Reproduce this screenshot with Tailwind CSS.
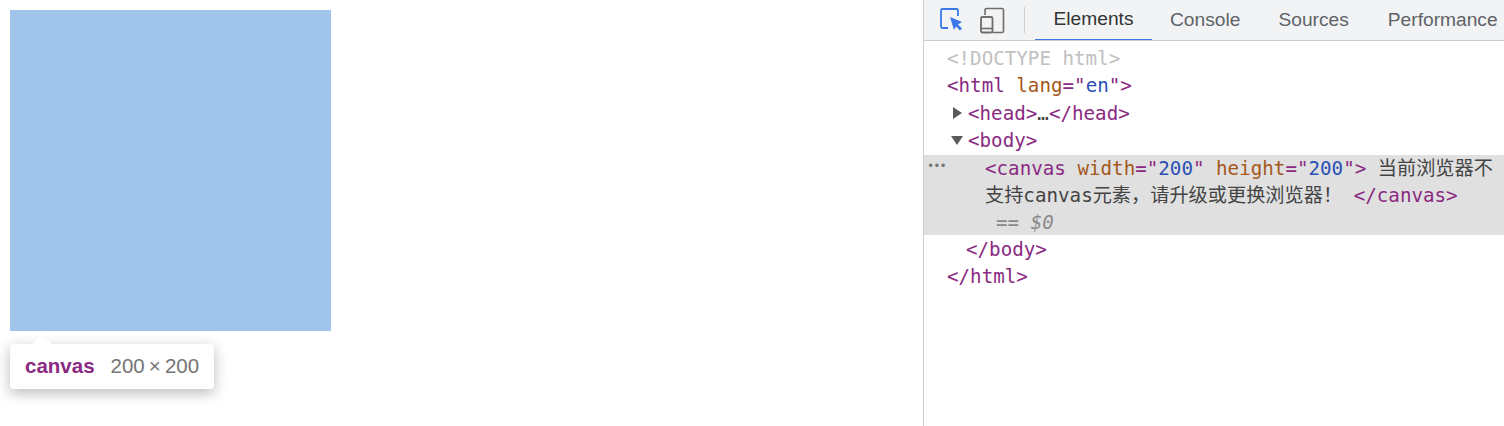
<!DOCTYPE html>
<html lang="en">
<head>
    <meta charset="UTF-8">
    <title>canvas devtools</title>
    <script src="https://cdn.jsdelivr.net/npm/@tailwindcss/browser@4"></script>
</head>
<body class="bg-white h-[426px] overflow-hidden">
    <div class="flex h-[426px]">
        <!-- page viewport -->
        <div class="relative w-[923px] shrink-0 p-[10px]">
            <div class="w-[321px] h-[321px] bg-[#a0c4ea]"></div>

            <!-- inspect tooltip -->
            <div class="absolute left-[10px] top-[344px] w-[204px] h-[45px] bg-white rounded-[4px] shadow-[0_4px_14px_rgba(0,0,0,0.28)] flex items-center pl-[15px] font-['Liberation_Sans',sans-serif] text-[20.500px]">
                <div class="absolute left-[22px] top-[-9px] w-0 h-0 border-x-[10px] border-x-transparent border-b-[9px] border-b-white"></div>
                <span class="font-bold text-[#8a2a82]">canvas</span>
                <span class="ml-[16px] text-[#757575]">200&#8201;×&#8201;200</span>
            </div>
        </div>

        <!-- devtools -->
        <div class="flex-1 min-w-0 border-l border-[#cccccc]">
            <div class="h-[41px] bg-[#f1f3f4] border-b border-[#cbcdd0] flex items-stretch font-['Liberation_Sans',sans-serif] text-[19.200px] text-[#5f6368] whitespace-nowrap overflow-hidden">
                <div class="flex items-center pl-[16px] w-[100px] shrink-0">
                    <svg width="24" height="24" viewBox="0 0 24 24" fill="none">
                        <path d="M8 20H2.500A1.500 1.500 0 0 1 1 18.500V2.500A1.500 1.500 0 0 1 2.500 1H16.500A1.500 1.500 0 0 1 18 2.500V8" stroke="#3b78e7" stroke-width="1.800"/>
                        <path d="M10 9L22 14L18 16.500L22 20.500L20 22.500L16 18.500L14 22Z" fill="#3b78e7"/>
                    </svg>
                    <svg class="ml-[16px]" width="25" height="27" viewBox="0 0 25 27" fill="none">
                        <path d="M5 8V3A1.500 1.500 0 0 1 6.500 1.500H22A1.500 1.500 0 0 1 23.500 3V24A1.500 1.500 0 0 1 22 25.500H12.500" stroke="#6e6e6e" stroke-width="1.600"/>
                        <rect x="1" y="10" width="11.500" height="15.500" rx="1.500" stroke="#6e6e6e" stroke-width="1.800"/>
                        <path d="M1 21.500H12.500" stroke="#6e6e6e" stroke-width="1.600"/>
                    </svg>
                </div>
                <div class="w-px h-[26px] bg-[#d0d0d0] self-center shrink-0"></div>
                <div class="ml-[10px] w-[117px] shrink-0 flex items-center justify-center text-[#333333] border-b-2 border-[#3b78e7] mb-[-1px]">Elements</div>
                <div class="ml-[18px] shrink-0 flex items-center">Console</div>
                <div class="ml-[38px] shrink-0 flex items-center">Sources</div>
                <div class="ml-[39px] shrink-0 flex items-center">Performance</div>
            </div>

            <div class="pt-[4px] font-['DejaVu_Sans_Mono','Noto_Sans_CJK_SC',monospace] text-[19.200px] leading-[27.400px] text-[#8a2a82] whitespace-nowrap">
                <div class="pl-[23px] text-[#c0c0c0]">&lt;!DOCTYPE html&gt;</div>
                <div class="pl-[23px]">&lt;html <span class="text-[#a5581c]">lang</span>="<span class="text-[#2a4fb5]">en</span>"&gt;</div>
                <div class="pl-[44px] relative">
                    <span class="absolute left-[29px] top-[7px] w-0 h-0 border-y-[6px] border-y-transparent border-l-[9px] border-l-[#5a5a5a]"></span>&lt;head&gt;<span class="text-[#444444]">…</span>&lt;/head&gt;
                </div>
                <div class="pl-[44px] relative">
                    <span class="absolute left-[27px] top-[9px] w-0 h-0 border-x-[6px] border-x-transparent border-t-[9px] border-t-[#5a5a5a]"></span>&lt;body&gt;
                </div>
                <div class="relative bg-[#e0e0e0] h-[80px] mb-px pl-[61px]">
                    <span class="absolute left-[3px] top-[-2px] text-[#777777] text-[12px] tracking-[-1px]">•••</span>
                    <div>&lt;canvas <span class="text-[#a5581c]">width</span>="<span class="text-[#2a4fb5]">200</span>" <span class="text-[#a5581c]">height</span>="<span class="text-[#2a4fb5]">200</span>"&gt; <span class="text-[#444444]">当前浏览器不</span></div>
                    <div><span class="text-[#444444]">支持canvas元素，请升级或更换浏览器！</span> &lt;/canvas&gt;</div>
                    <div class="pl-[11px] text-[#8a8a8a]">== <i>$0</i></div>
                </div>
                <div class="pl-[42px]">&lt;/body&gt;</div>
                <div class="pl-[23px]">&lt;/html&gt;</div>
            </div>
        </div>
    </div>
</body>
</html>
